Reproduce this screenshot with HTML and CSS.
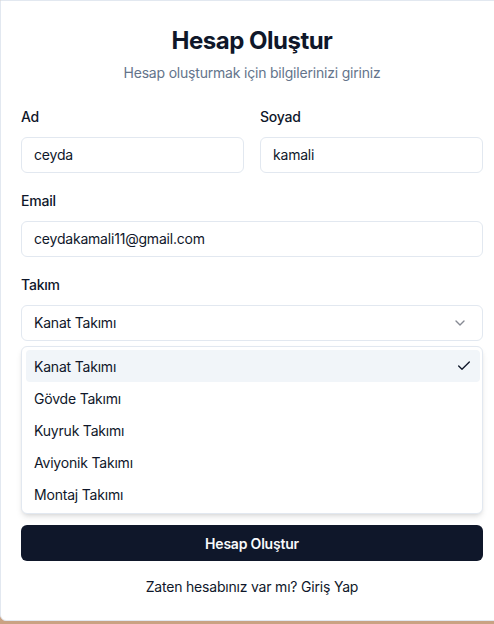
FILE: index.html
```html
<!DOCTYPE html>
<html lang="tr">
<head>
<meta charset="utf-8">
<title>Hesap Oluştur</title>
<link rel="stylesheet" href="styles.css">
</head>
<body>
<div class="card">
  <div class="card-header">
    <h1 class="title">Hesap Oluştur</h1>
    <p class="subtitle">Hesap oluşturmak için bilgilerinizi giriniz</p>
  </div>
  <form class="card-content">
    <div class="row">
      <div class="field">
        <label class="label">Ad</label>
        <div class="input">ceyda</div>
      </div>
      <div class="field">
        <label class="label">Soyad</label>
        <div class="input">kamali</div>
      </div>
    </div>
    <div class="field">
      <label class="label">Email</label>
      <div class="input">ceydakamali11@gmail.com</div>
    </div>
    <div class="field select-field">
      <label class="label">Takım</label>
      <div class="input select">
        <span>Kanat Takımı</span>
        <svg class="chevron" width="16" height="16" viewBox="0 0 24 24" fill="none" stroke="currentColor" stroke-width="2" stroke-linecap="round" stroke-linejoin="round"><path d="m6 9 6 6 6-6"/></svg>
      </div>
      <div class="menu">
        <div class="item active"><span>Kanat Takımı</span>
          <svg class="check" width="16" height="16" viewBox="0 0 24 24" fill="none" stroke="currentColor" stroke-width="2" stroke-linecap="round" stroke-linejoin="round"><path d="M20 6 9 17l-5-5"/></svg>
        </div>
        <div class="item"><span>Gövde Takımı</span></div>
        <div class="item"><span>Kuyruk Takımı</span></div>
        <div class="item"><span>Aviyonik Takımı</span></div>
        <div class="item"><span>Montaj Takımı</span></div>
      </div>
    </div>
    <button type="button" class="button">Hesap Oluştur</button>
    <p class="footer">Zaten hesabınız var mı? <a class="link">Giriş Yap</a></p>
  </form>
</div>
</body>
</html>
```
FILE: styles.css
```css
* { box-sizing: border-box; }
html, body { margin: 0; padding: 0; }
body {
  background: #c9a283;
  font-family: Inter, "Noto Sans", sans-serif;
  color: #0f172a;
  height: 624px;
  width: 494px;
  overflow: hidden;
  letter-spacing: -0.2px;
}
.card {
  width: 504px;
  height: 621px;
  background: #ffffff;
  border: 1px solid #e2e8f0;
  border-radius: 0 0 6px 6px;
}
.card-header {
  padding: 24px 20px 24px;
  text-align: center;
}
.title {
  margin: 0;
  font-size: 24px;
  line-height: 32px;
  font-weight: 700;
  letter-spacing: -0.5px;
  color: #0f172a;
}
.subtitle {
  margin: 6px 0 0;
  font-size: 14px;
  line-height: 20px;
  color: #64748b;
}
.card-content {
  padding: 0 20px;
  display: flex;
  flex-direction: column;
  gap: 18px;
}
.row {
  display: grid;
  grid-template-columns: 1fr 1fr;
  gap: 16px;
}
.field {
  display: flex;
  flex-direction: column;
  gap: 10px;
}
.label {
  font-size: 14px;
  line-height: 20px;
  font-weight: 500;
  color: #0f172a;
}
.input {
  height: 36px;
  border: 1px solid #e2e8f0;
  border-radius: 6px;
  padding: 0 12px;
  font-size: 14px;
  line-height: 34px;
  color: #0f172a;
  background: #fff;
}
.select-field { position: relative; margin-bottom: 166px; }
.select {
  display: flex;
  align-items: center;
  justify-content: space-between;
}
.chevron { color: #0f172a; opacity: 0.5; margin-right: 2px; }
.menu {
  position: absolute;
  left: 0;
  right: 0;
  top: 71px;
  z-index: 5;
  background: #fff;
  border: 1px solid #e2e8f0;
  border-radius: 6px;
  padding: 3px 2px 3px 4px;
  box-shadow: 0 4px 6px -1px rgba(0,0,0,0.1), 0 2px 4px -2px rgba(0,0,0,0.1);
}
.item {
  height: 32px;
  display: flex;
  align-items: center;
  justify-content: space-between;
  padding: 0 8px 0 8px;
  font-size: 14px;
  color: #0f172a;
  border-radius: 4px;
}
.item.active { background: #f1f5f9; }
.check { color: #0f172a; }
.button {
  height: 36px;
  border: none;
  border-radius: 6px;
  background: #0f172a;
  color: #f8fafc;
  font-family: inherit;
  font-size: 14px;
  font-weight: 600;
  letter-spacing: -0.2px;
}
.footer {
  margin: -2px 0 0;
  text-align: center;
  font-size: 14px;
  line-height: 20px;
  color: #0f172a;
}
.link { color: inherit; text-decoration: none; }
```
